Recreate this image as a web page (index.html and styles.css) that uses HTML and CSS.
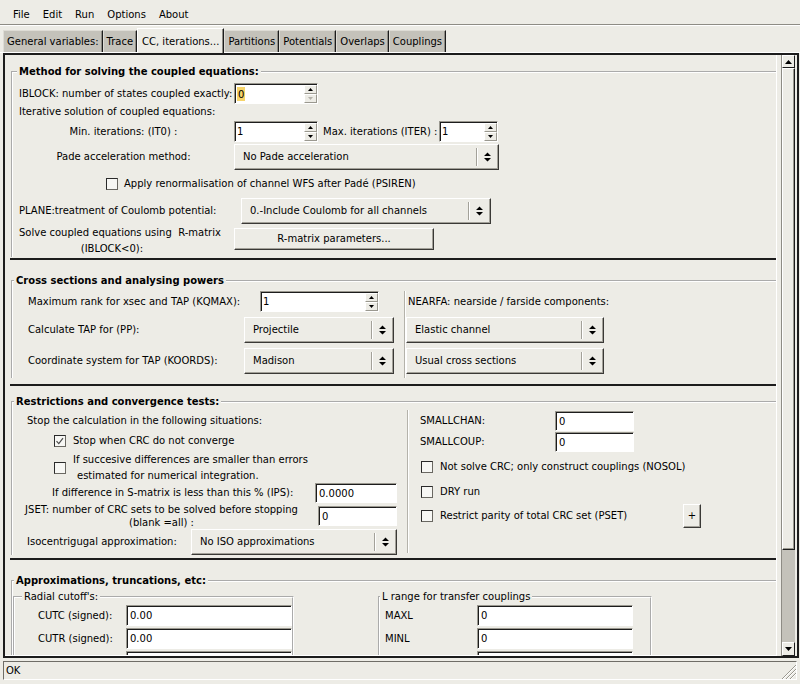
FILE: index.html
```html
<!DOCTYPE html>
<html>
<head>
<meta charset="utf-8">
<title>CC, iterations</title>
<link rel="stylesheet" href="styles.css">
</head>
<body>
<div class="app">
  <div class="menubar">
    <span>File</span><span>Edit</span><span>Run</span><span>Options</span><span>About</span>
  </div>
  <div class="tabs">
    <div class="tab">General variables:</div>
    <div class="tab">Trace</div>
    <div class="tab active">CC, iterations...</div>
    <div class="tab">Partitions</div>
    <div class="tab">Potentials</div>
    <div class="tab">Overlaps</div>
    <div class="tab">Couplings</div>
  </div>
  <div class="scrolled">
    <div class="viewport">
      <div class="content">

        <section class="sec sec1">
          <fieldset class="grp">
            <legend class="ttl ttl1">Method for solving the coupled equations:</legend>
            <div class="row s1-r1">
              <div class="lbl s1-lbl">IBLOCK: number of states coupled exactly:</div>
              <div class="spin s1-spin">
                <div class="spin-val"><span class="sel">0</span></div>
                <div class="spin-btns">
                  <span class="sb"><svg width="5" height="3" viewBox="0 0 5 3"><path d="M0 3L2.5 0L5 3Z"/></svg></span>
                  <span class="sb dis"><svg width="5" height="3" viewBox="0 0 5 3"><path d="M0 0L5 0L2.5 3Z"/></svg></span>
                </div>
              </div>
            </div>
            <div class="row s1-r2"><div class="lbl pl6">Iterative solution of coupled equations:</div></div>
            <div class="row s1-r3">
              <div class="lbl s1-clbl">Min. iterations: (IT0) :</div>
              <div class="spin s1-spin">
                <div class="spin-val">1</div>
                <div class="spin-btns">
                  <span class="sb"><svg width="5" height="3" viewBox="0 0 5 3"><path d="M0 3L2.5 0L5 3Z"/></svg></span>
                  <span class="sb"><svg width="5" height="3" viewBox="0 0 5 3"><path d="M0 0L5 0L2.5 3Z"/></svg></span>
                </div>
              </div>
              <div class="lbl s1-max">Max. iterations (ITER) :</div>
              <div class="spin s1-spin2">
                <div class="spin-val">1</div>
                <div class="spin-btns">
                  <span class="sb"><svg width="5" height="3" viewBox="0 0 5 3"><path d="M0 3L2.5 0L5 3Z"/></svg></span>
                  <span class="sb"><svg width="5" height="3" viewBox="0 0 5 3"><path d="M0 0L5 0L2.5 3Z"/></svg></span>
                </div>
              </div>
            </div>
            <div class="row s1-r4">
              <div class="lbl s1-clbl">Pade acceleration method:</div>
              <div class="opt s1-pade">
                <span class="opt-text">No Pade acceleration</span>
                <span class="opt-ind"><svg width="7" height="10" viewBox="0 0 7 10"><path d="M0 4L3.5 0.5L7 4Z M0 6L7 6L3.5 9.5Z"/></svg></span>
              </div>
            </div>
            <div class="row s1-r5">
              <span class="chk"></span>
              <span class="lbl">Apply renormalisation of channel WFS after Padé (PSIREN)</span>
            </div>
            <div class="row s1-r6">
              <div class="lbl s1-plane">PLANE:treatment of Coulomb potential:</div>
              <div class="opt s1-plopt">
                <span class="opt-text">0.-Include Coulomb for all channels</span>
                <span class="opt-ind"><svg width="7" height="10" viewBox="0 0 7 10"><path d="M0 4L3.5 0.5L7 4Z M0 6L7 6L3.5 9.5Z"/></svg></span>
              </div>
            </div>
            <div class="row s1-r7">
              <div class="s1-rbox">
                <div class="lbl2">
                  <span>Solve coupled equations using&nbsp; R-matrix</span>
                  <span class="shift">(IBLOCK&lt;0):</span>
                </div>
              </div>
              <div class="btn s1-rbtn">R-matrix parameters...</div>
            </div>
          </fieldset>
        </section>

        <section class="sec sec2">
          <fieldset class="grp">
            <legend class="ttl ttl2">Cross sections and analysing powers</legend>
            <div class="cols s2-cols">
              <div class="s2-left">
                <div class="row h21">
                  <div class="lbl s2-l1">Maximum rank for xsec and TAP (KQMAX):</div>
                  <div class="spin s2-spin">
                    <div class="spin-val">1</div>
                    <div class="spin-btns">
                      <span class="sb"><svg width="5" height="3" viewBox="0 0 5 3"><path d="M0 3L2.5 0L5 3Z"/></svg></span>
                      <span class="sb"><svg width="5" height="3" viewBox="0 0 5 3"><path d="M0 0L5 0L2.5 3Z"/></svg></span>
                    </div>
                  </div>
                </div>
                <div class="row h26 mt5">
                  <div class="lbl s2-l2">Calculate TAP for (PP):</div>
                  <div class="opt s2-opt">
                    <span class="opt-text">Projectile</span>
                    <span class="opt-ind"><svg width="7" height="10" viewBox="0 0 7 10"><path d="M0 4L3.5 0.5L7 4Z M0 6L7 6L3.5 9.5Z"/></svg></span>
                  </div>
                </div>
                <div class="row h26 mt5">
                  <div class="lbl s2-l2">Coordinate system for TAP (KOORDS):</div>
                  <div class="opt s2-opt">
                    <span class="opt-text">Madison</span>
                    <span class="opt-ind"><svg width="7" height="10" viewBox="0 0 7 10"><path d="M0 4L3.5 0.5L7 4Z M0 6L7 6L3.5 9.5Z"/></svg></span>
                  </div>
                </div>
              </div>
              <div class="vsep s2-right">
                <div class="row h21"><div class="lbl pl3">NEARFA: nearside / farside components:</div></div>
                <div class="row h26 mt5">
                  <div class="opt s2-ropt">
                    <span class="opt-text">Elastic channel</span>
                    <span class="opt-ind"><svg width="7" height="10" viewBox="0 0 7 10"><path d="M0 4L3.5 0.5L7 4Z M0 6L7 6L3.5 9.5Z"/></svg></span>
                  </div>
                </div>
                <div class="row h26 mt5">
                  <div class="opt s2-ropt">
                    <span class="opt-text">Usual cross sections</span>
                    <span class="opt-ind"><svg width="7" height="10" viewBox="0 0 7 10"><path d="M0 4L3.5 0.5L7 4Z M0 6L7 6L3.5 9.5Z"/></svg></span>
                  </div>
                </div>
              </div>
            </div>
          </fieldset>
        </section>

        <section class="sec sec3">
          <fieldset class="grp">
            <legend class="ttl ttl2">Restrictions and convergence tests:</legend>
            <div class="cols s3-cols">
              <div class="s3-left">
                <div class="row h14"><div class="lbl pl14">Stop the calculation in the following situations:</div></div>
                <div class="row h14 mt6 pl41">
                  <span class="chk"><svg width="12" height="12" viewBox="0 0 12 12"><path d="M2.5 6.2L4.8 8.6L9 3.2" fill="none" stroke="#4a4a4a" stroke-width="1.2"/></svg></span>
                  <span class="lbl gap7">Stop when CRC do not converge</span>
                </div>
                <div class="row s3-two mt4 pl41">
                  <span class="chk"></span>
                  <div class="lbl2l gap7">
                    <span>If succesive differences are smaller than errors</span>
                    <span class="pl4">estimated for numerical integration.</span>
                  </div>
                </div>
                <div class="row h20">
                  <div class="lbl s3-ips">If difference in S-matrix is less than this % (IPS):</div>
                  <div class="entry s3-ipsent">0.0000</div>
                </div>
                <div class="row h26">
                  <div class="s3-jset">
                    <span>JSET: number of CRC sets to be solved before stopping</span>
                    <span>(blank =all) :</span>
                  </div>
                  <div class="entry s3-jent">0</div>
                </div>
                <div class="row h26">
                  <div class="lbl s3-iso">Isocentrigugal approximation:</div>
                  <div class="opt s3-isoopt">
                    <span class="opt-text">No ISO approximations</span>
                    <span class="opt-ind"><svg width="7" height="10" viewBox="0 0 7 10"><path d="M0 4L3.5 0.5L7 4Z M0 6L7 6L3.5 9.5Z"/></svg></span>
                  </div>
                </div>
              </div>
              <div class="vsep s3-right">
                <div class="row h20 mt1">
                  <div class="lbl s3-rl">SMALLCHAN:</div>
                  <div class="entry s3-rent">0</div>
                </div>
                <div class="row h20 mt1">
                  <div class="lbl s3-rl">SMALLCOUP:</div>
                  <div class="entry s3-rent">0</div>
                </div>
                <div class="row h26 mt2 pl13">
                  <span class="chk"></span>
                  <span class="lbl gap7">Not solve CRC; only construct couplings (NOSOL)</span>
                </div>
                <div class="row h24 pl13">
                  <span class="chk"></span>
                  <span class="lbl gap7">DRY run</span>
                </div>
                <div class="row h24 pl13">
                  <span class="chk"></span>
                  <span class="lbl gap7 s3-pset">Restrict parity of total CRC set (PSET)</span>
                  <span class="btn s3-plus">+</span>
                </div>
              </div>
            </div>
          </fieldset>
        </section>

        <section class="sec sec4">
          <fieldset class="grp">
            <legend class="ttl ttl2">Approximations, truncations, etc:</legend>
            <div class="cols s4-cols">
              <fieldset class="sub s4-rad">
                <legend class="subttl s4-radttl">Radial cutoff's:</legend>
                <div class="row h21 mt2">
                  <div class="lbl s4-rl">CUTC (signed):</div>
                  <div class="entry s4-rent">0.00</div>
                </div>
                <div class="row h21 mt2">
                  <div class="lbl s4-rl">CUTR (signed):</div>
                  <div class="entry s4-rent">0.00</div>
                </div>
                <div class="row h21 mt2">
                  <div class="lbl s4-rl"></div>
                  <div class="entry s4-rent"></div>
                </div>
              </fieldset>
              <fieldset class="sub s4-lr">
                <legend class="subttl s4-lrttl">L range for transfer couplings</legend>
                <div class="row h21 mt2">
                  <div class="lbl s4-ll">MAXL</div>
                  <div class="entry s4-lent">0</div>
                </div>
                <div class="row h21 mt2">
                  <div class="lbl s4-ll">MINL</div>
                  <div class="entry s4-lent">0</div>
                </div>
                <div class="row h21 mt2">
                  <div class="lbl s4-ll"></div>
                  <div class="entry s4-lent"></div>
                </div>
              </fieldset>
            </div>
          </fieldset>
        </section>

      </div>
    </div>
    <div class="vscroll">
      <div class="sbtn sbtn-up"><svg width="7" height="4" viewBox="0 0 7 4"><path d="M0 4L3.5 0L7 4Z"/></svg></div>
      <div class="slider"></div>
      <div class="trough"></div>
      <div class="sbtn sbtn-down"><svg width="7" height="4" viewBox="0 0 7 4"><path d="M0 0L7 0L3.5 4Z"/></svg></div>
    </div>
  </div>
  <div class="status">
    <span class="status-text">OK</span>
    <svg class="grip" width="15" height="15" viewBox="0 0 15 15">
      <path d="M15 1L1 15M15 5L5 15M15 9L9 15" stroke="#9a988f" stroke-width="1"/>
      <path d="M15 2L2 15M15 6L6 15M15 10L10 15" stroke="#ffffff" stroke-width="1"/>
    </svg>
  </div>
</div>
</body>
</html>
```

FILE: styles.css
```css
* { box-sizing: border-box; }
html, body { margin: 0; padding: 0; }
body {
  width: 800px;
  height: 684px;
  overflow: hidden;
  background: #edece6;
  font-family: "DejaVu Sans", "Liberation Sans", sans-serif;
  font-size: 10px;
  line-height: 12px;
  color: #000;
}
.app { display: flex; flex-direction: column; width: 800px; height: 684px; }

/* menu bar */
.menubar {
  flex: none;
  height: 26px;
  display: flex;
  align-items: center;
  gap: 13px;
  padding: 5px 0 0 13px;
  border-bottom: 1px solid #fff;
  box-shadow: inset 0 -1px 0 #8e8c85;
}

/* notebook tabs */
.tabs {
  flex: none;
  height: 27px;
  display: flex;
  align-items: flex-end;
  padding-left: 3px;
  border-bottom: 1px solid #fff;
}
.tab {
  height: 22px;
  display: flex;
  align-items: center;
  padding: 1px 3px 0 3px;
  background: #c4c2ba;
  border-top: 1px solid #dedcd5;
  border-left: 1px solid #dedcd5;
  border-right: 1px solid #1c1c1c;
  box-shadow: inset -1px 0 0 #8e8c85;
  white-space: nowrap;
}
.tab.active {
  height: 25px;
  margin-bottom: -1px;
  padding: 1px 4px 0 4px;
  background: #edece6;
  border-top: 1px solid #fff;
  border-left: 1px solid #fff;
}

/* scrolled window */
.scrolled {
  flex: none;
  margin-left: 3px;
  width: 796px;
  height: 605px;
  border: 2px solid #1c1c1c;
  display: flex;
}
.viewport {
  width: 772px;
  height: 601px;
  overflow: hidden;
  border-right: 1px solid #fff;
  border-bottom: 1px solid #fff;
}
.content { width: 771px; }

.vscroll {
  margin-left: 4px;
  width: 14px;
  height: 601px;
  display: flex;
  flex-direction: column;
  background: #c4c2ba;
  border-left: 1px solid #8e8c85;
}
.sbtn {
  flex: none;
  display: flex;
  align-items: center;
  justify-content: center;
  background: #edece6;
  border-top: 1px solid #fff;
  border-left: 1px solid #fff;
  border-right: 1px solid #1c1c1c;
  border-bottom: 1px solid #1c1c1c;
}
.sbtn-up { height: 13px; }
.sbtn-down { height: 14px; }
.slider {
  flex: none;
  height: 482px;
  background: #edece6;
  border-top: 1px solid #fff;
  border-left: 1px solid #fff;
  border-right: 1px solid #1c1c1c;
  border-bottom: 1px solid #1c1c1c;
  box-shadow: inset -1px -1px 0 #9a988f;
}
.trough { flex: 1; }

/* status bar */
.status {
  flex: none;
  margin: 3px 0 0 3px;
  width: 794px;
  height: 19px;
  display: flex;
  align-items: center;
  padding-left: 2px;
  border-top: 1px solid #6f6d67;
  border-left: 1px solid #6f6d67;
  border-bottom: 1px solid #fff;
  border-right: 1px solid #fff;
}
.status-text { flex: 1; }
.grip { align-self: flex-end; flex: none; }

/* sections */
.sec {
  margin-left: 5px;
  width: 766px;
  border-bottom: 2px solid #1c1c1c;
}
.grp {
  margin: 0 0 0 1px;
  padding: 0;
  min-width: 0;
  border: none;
  border-top: 2px groove #fff;
  border-left: 2px groove #fff;
}
.ttl {
  font-weight: bold;
  line-height: 14px;
  padding: 0 2px;
}
.ttl1 { margin-left: 4px; }
.ttl2 { margin-left: 1px; }

.sec1 { padding-top: 10px; padding-bottom: 1px; }
.sec2 { padding-top: 14px; padding-bottom: 6px; }
.sec3 { padding-top: 9px; padding-bottom: 3px; }
.sec4 { padding-top: 14px; height: 120px; }

/* rows & labels */
.row { display: flex; align-items: center; }
.lbl { white-space: nowrap; flex: none; }
.pl3 { padding-left: 3px; }
.pl4 { padding-left: 4px; }
.pl6 { padding-left: 6px; }
.pl13 { padding-left: 13px; }
.pl14 { padding-left: 14px; }
.pl41 { padding-left: 41px; }
.gap7 { margin-left: 7px; }
.mt1 { margin-top: 1px; }
.mt2 { margin-top: 2px; }
.mt4 { margin-top: 4px; }
.mt5 { margin-top: 5px; }
.mt6 { margin-top: 6px; }
.h14 { height: 14px; }
.h20 { height: 20px; }
.h21 { height: 21px; }
.h24 { height: 24px; }
.h26 { height: 26px; }

/* widgets */
.entry, .spin {
  flex: none;
  background: #fff;
  border-top: 1px solid #9a988f;
  border-left: 1px solid #9a988f;
  border-right: 1px solid #fff;
  border-bottom: 1px solid #fff;
  box-shadow: inset 1px 1px 0 #1c1c1c;
}
.entry {
  display: flex;
  align-items: center;
  padding-left: 3px;
  padding-top: 1px;
}
.spin { display: flex; height: 21px; }
.spin-val {
  flex: 1;
  display: flex;
  align-items: center;
  padding: 1px 0 0 2px;
}
.sel { background: #f6d46a; padding: 1px 1px 0 1px; line-height: 13px; }
.spin-btns {
  flex: none;
  width: 13px;
  display: flex;
  flex-direction: column;
  padding: 1px 0 0 0;
}
.sb {
  flex: 1;
  display: flex;
  align-items: center;
  justify-content: center;
  background: #edece6;
  border-top: 1px solid #fff;
  border-left: 1px solid #fff;
  border-right: 1px solid #9a988f;
  border-bottom: 1px solid #9a988f;
}
.sb svg { fill: #000; }
.sb.dis svg { fill: #b3b1a9; }

.opt, .btn {
  flex: none;
  display: flex;
  align-items: center;
  background: #edece6;
  border-top: 1px solid #fff;
  border-left: 1px solid #fff;
  border-right: 1px solid #3a3936;
  border-bottom: 1px solid #3a3936;
  box-shadow: inset -1px -1px 0 #a3a199;
  white-space: nowrap;
}
.opt { height: 26px; }
.opt-text { flex: 1; padding-left: 8px; }
.opt-ind {
  flex: none;
  width: 21px;
  height: 18px;
  display: flex;
  align-items: center;
  justify-content: center;
  border-left: 1px solid #a3a199;
  box-shadow: inset 1px 0 0 #fff;
  margin-right: 1px;
}
.btn { justify-content: center; }

.chk {
  flex: none;
  width: 12px;
  height: 12px;
  background: #f7f7f4;
  border: 1px solid #2a2a2a;
  border-right-color: #6a6862;
  border-bottom-color: #6a6862;
  display: flex;
  align-items: center;
  justify-content: center;
}
.chk svg { margin: -1px; }

.cols { display: flex; align-items: flex-start; }
.vsep {
  border-left: 1px solid #b4b2aa;
  box-shadow: inset 1px 0 0 #fff;
}

/* section 1 */
.s1-r1 { margin-top: 4px; height: 21px; }
.s1-r2 { height: 16px; }
.s1-r3 { margin-top: 1px; height: 21px; }
.s1-r4 { margin-top: 2px; height: 26px; }
.s1-r5 { height: 27px; padding-left: 93px; gap: 6px; }
.s1-r6 { margin-top: 1px; height: 26px; }
.s1-r7 { margin-top: 1px; height: 32px; align-items: flex-start; }
.s1-lbl { width: 221px; padding-left: 6px; }
.s1-spin { width: 84px; }
.s1-clbl { width: 221px; text-align: center; }
.s1-max { width: 116px; margin-left: 5px; }
.s1-spin2 { width: 59px; }
.s1-pade { width: 265px; }
.s1-plane { width: 228px; padding-left: 6px; }
.s1-plopt { width: 250px; }
.s1-rbox { width: 221px; padding-left: 6px; flex: none; }
.lbl2 {
  display: inline-flex;
  flex-direction: column;
  align-items: center;
  line-height: 16px;
  white-space: nowrap;
}
.shift { padding-right: 16px; }
.s1-rbtn { width: 200px; height: 22px; margin-top: 3px; }

/* section 2 */
.s2-cols { margin-top: 3px; }
.s2-left { width: 391px; flex: none; }
.s2-l1 { width: 247px; padding-left: 15px; }
.s2-l2 { width: 231px; padding-left: 15px; }
.s2-spin { width: 119px; }
.s2-opt { width: 150px; }
.s2-right { height: 87px; flex: none; width: 300px; }
.s2-ropt { width: 198px; margin-left: 1px; }

/* section 3 */
.s3-cols { margin-top: 1px; }
.s3-left { width: 394px; flex: none; padding-top: 4px; }
.s3-two { height: 31px; }
.lbl2l {
  display: flex;
  flex-direction: column;
  line-height: 16px;
  white-space: nowrap;
}
.s3-ips { width: 302px; padding-left: 39px; }
.s3-ipsent { width: 82px; height: 20px; }
.s3-jset {
  flex: none;
  width: 305px;
  padding-right: 8px;
  display: flex;
  flex-direction: column;
  align-items: center;
  line-height: 13px;
  white-space: nowrap;
}
.s3-jent { width: 79px; height: 20px; }
.s3-iso { width: 178px; padding-left: 14px; }
.s3-isoopt { width: 206px; }
.s3-right { height: 143px; flex: none; width: 368px; }
.s3-rl { width: 147px; padding-left: 12px; }
.s3-rent { width: 79px; height: 20px; }
.s3-pset { width: 243px; }
.s3-plus { width: 18px; height: 24px; }

/* section 4 */
.s4-cols { margin-top: 3px; }
.sub {
  margin: 0;
  padding: 0;
  min-width: 0;
  flex: none;
  border: none;
  border-top: 2px groove #fff;
  border-left: 2px groove #fff;
  border-right: 2px groove #fff;
}
.subttl { line-height: 12px; padding: 0 2px; }
.s4-rad { width: 281px; }
.s4-radttl { margin-left: 7px; }
.s4-rl { width: 111px; padding-left: 23px; }
.s4-rent { width: 166px; height: 21px; }
.s4-lr { width: 274px; margin-left: 84px; }
.s4-lrttl { margin-left: 0; }
.s4-ll { width: 97px; padding-left: 5px; }
.s4-lent { width: 156px; height: 21px; }
```
